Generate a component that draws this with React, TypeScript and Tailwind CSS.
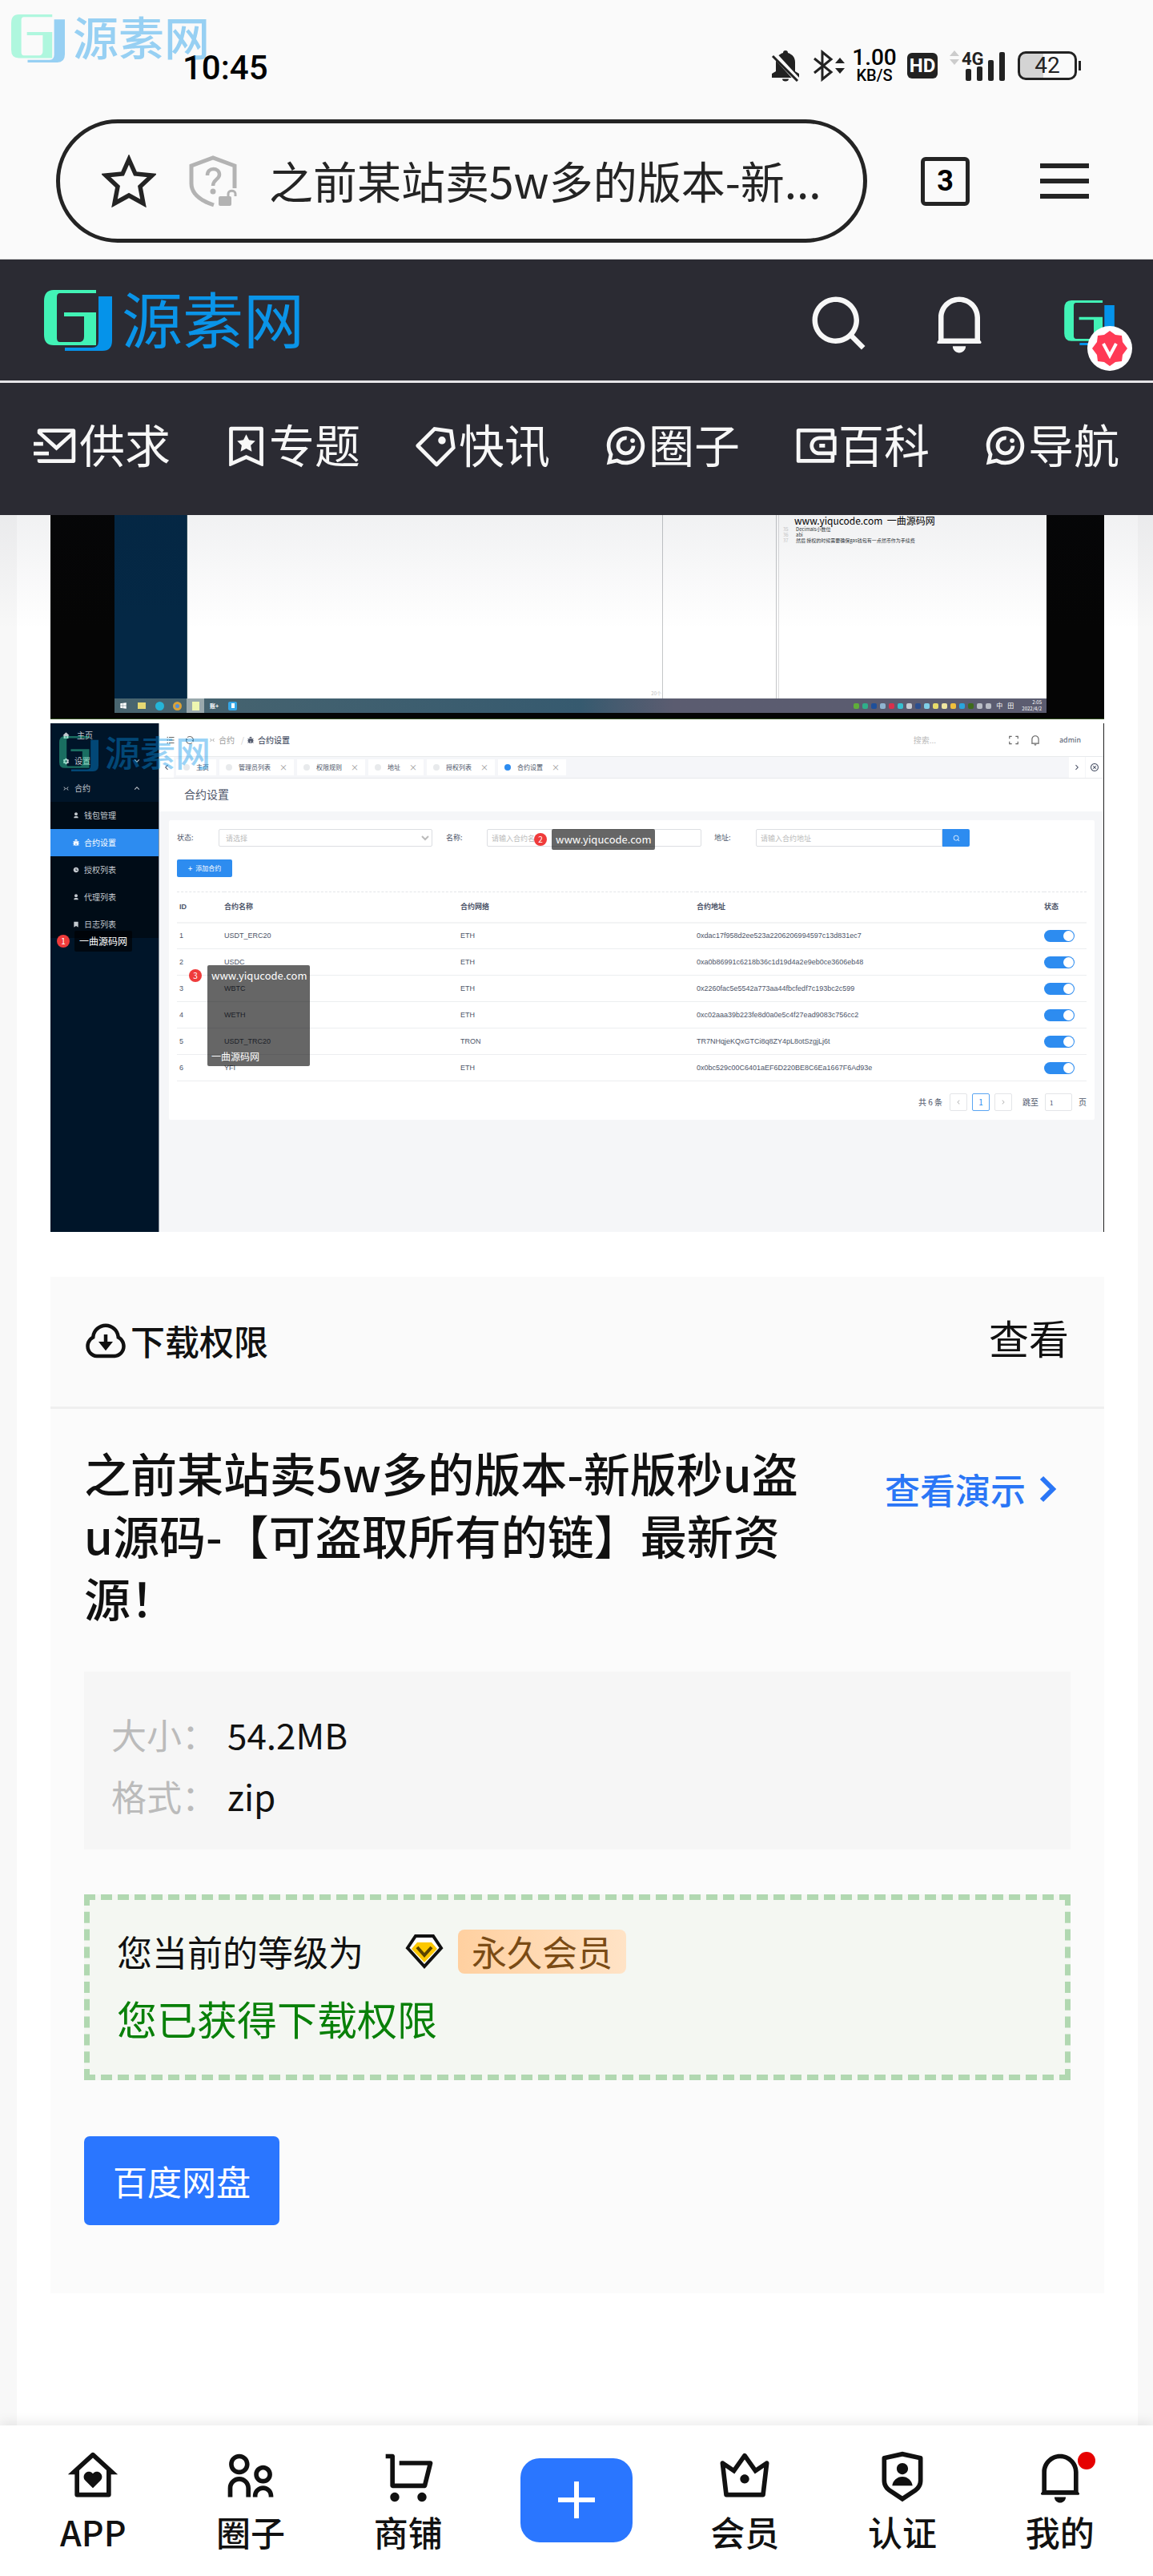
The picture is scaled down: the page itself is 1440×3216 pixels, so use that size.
import React from "react";
import {
  RiMailSendLine,
  RiBookmark3Line,
  RiPriceTag3Line,
  RiWallet3Line,
  RiSearchLine,
  RiNotification4Line,
  RiHomeHeartLine,
  RiParentLine,
  RiShoppingCartLine,
  RiVipCrown2Line,
  RiShieldUserLine,
  RiDownloadCloudLine,
  RiHome4Fill,
  RiSettings3Fill,
  RiUser3Fill,
  RiBookmarkFill,
  RiBugFill,
  RiTimeFill,
  RiFullscreenLine,
  RiListUnordered,
  RiRefreshLine,
  RiCloseCircleLine,
  RiArrowDownSLine,
  RiArrowUpSLine,
  RiArrowLeftSLine,
  RiArrowRightSLine,
  RiWindowsFill,
  RiContractLeftRightLine,
} from "react-icons/ri";

function LogoMark({ className }: { className: string }) {
  return (
    <svg viewBox="0 0 85 76" className={className} aria-hidden="true">
      <path
        fill="#42f3b6"
        d="M65 0H12Q0 0 0 14V56Q0 69 12 69H65V28H25V33H50V58Q50 64 45 65H20Q16 65 16 60V9Q16 4 20 4H65Z"
      />
      <path fill="#0593ea" d="M68 8H85V63Q85 76 73 76H26V72H60Q68 72 68 64Z" />
    </svg>
  );
}

function ChatRingIcon({ className }: { className?: string }) {
  return (
    <svg viewBox="0 0 24 24" className={className} fill="currentColor" aria-hidden="true">
      <path d="M7.291 20.824L2 22l1.176-5.291A9.956 9.956 0 0 1 2 12C2 6.477 6.477 2 12 2s10 4.477 10 10-4.477 10-10 10a9.956 9.956 0 0 1-4.709-1.176zm.29-2.113l.653.35A7.955 7.955 0 0 0 12 20a8 8 0 1 0-8-8c0 1.334.325 2.618.94 3.766l.349.653-.655 2.947 2.947-.655z" />
      <path d="M12.5 8A4 4 0 1 0 16 12" fill="none" stroke="currentColor" strokeWidth="2" />
      <circle cx="15.6" cy="9.3" r="1.2" />
    </svg>
  );
}

function StatusBar() {
  return (
    <div className="flex h-12 items-center justify-between pr-[90px] pl-[228px] text-[#222]">
      <time className="pt-[6px] font-['Roboto'] text-[42px] leading-12 font-medium text-black">10:45</time>
      <div className="flex items-center gap-[14px]">
        <svg viewBox="0 0 36 40" className="h-10 w-9" aria-label="静音">
          <path
            fill="#222"
            d="M18 1a3 3 0 0 1 3 3c6 2 9 6 9 12v11l5 3v5H1v-5l5-3V16C6 10 9 6 15 4a3 3 0 0 1 3-3ZM14 36.500h8a4 3 0 0 1-8 0Z"
          />
          <path d="M1 3 35 40" stroke="#fafafa" strokeWidth="7" />
          <path d="M2 8 33 39" stroke="#222" strokeWidth="3" />
        </svg>
        <svg viewBox="0 0 40 40" className="-mr-1 ml-[2px] size-10" aria-label="蓝牙">
          <path d="M2 11 23 28 12 37V3L23 12 2 29" fill="none" stroke="#222" strokeWidth="3" />
          <path d="M28 17h12l-6-7ZM28 23h12l-6 7Z" fill="#222" />
        </svg>
        <div className="flex w-[54px] flex-col items-center font-['Roboto'] font-medium text-black">
          <span className="text-[28px] leading-6">1.00</span>
          <span className="text-[20px] leading-5">KB/S</span>
        </div>
        <span className="flex h-8 w-[38px] items-center justify-center rounded-md bg-[#222] font-['Roboto'] text-[24px] font-bold text-white">
          HD
        </span>
        <svg viewBox="0 0 72 40" className="h-10 w-[72px]" aria-label="4G 信号">
          <path d="M1 8h12L7 1ZM1 12h12l-6 7Z" fill="#ccc" />
          <text x="16" y="19" fontFamily="Roboto" fontSize="22" fontWeight="700" fill="#222">
            4G
          </text>
          <rect x="21" y="24" width="7" height="15" rx="2" fill="#222" />
          <rect x="35" y="21" width="7" height="18" rx="2" fill="#222" />
          <rect x="49" y="13" width="7" height="26" rx="2" fill="#222" />
          <rect x="63" y="3" width="7" height="36" rx="2" fill="#222" />
        </svg>
        <div className="flex items-center gap-[2px]">
          <span className="flex h-9 w-[74px] items-center justify-center rounded-[10px] border-3 border-[#222] bg-linear-to-r from-[#d4d4d4] from-42% to-transparent to-42% font-['Roboto'] text-[28px] text-[#222]">
            42
          </span>
          <span className="h-3 w-[3px] bg-[#222]" />
        </div>
      </div>
    </div>
  );
}

function AddressBar() {
  return (
    <div className="mt-[43px] flex items-center pr-20 pl-[70px]">
      <label className="flex h-[154px] min-w-0 flex-1 items-center rounded-full border-5 border-[#242424] pl-[52px]">
        <svg viewBox="0 0 68 66" className="h-[66px] w-[68px] shrink-0" aria-hidden="true">
          <path
            d="M34 6 42 24 63 26 48 40 52 61 34 51 16 61 20 40 5 26 26 24Z"
            fill="none"
            stroke="#242424"
            strokeWidth="5.500"
          />
        </svg>
        <svg viewBox="0 0 62 66" className="ml-10 h-[66px] w-[62px] shrink-0" fill="none" aria-hidden="true">
          <path
            d="M58 42V14L31 4 4 14v22c0 12 10 21 28 27"
            stroke="#b3b3b3"
            strokeWidth="5"
          />
          <path d="M24 26c0-11 15-10 15-1 0 6-8 6-8 14" stroke="#b3b3b3" strokeWidth="4.500" />
          <circle cx="31" cy="46" r="3.500" fill="#b3b3b3" />
          <rect x="38" y="52" width="16" height="12" rx="2" fill="#b3b3b3" />
          <path d="M50 52v-3c0-5 9-5 9 0v3" stroke="#b3b3b3" strokeWidth="3" />
        </svg>
        <input
          type="text"
          aria-label="网址"
          defaultValue="之前某站卖5w多的版本-新..."
          className="ml-[39px] min-w-0 flex-1 bg-transparent pb-1 text-[55px] text-[#242424] outline-none"
        />
      </label>
      <button
        type="button"
        aria-label="标签页"
        className="ml-[67px] flex size-[61px] items-center justify-center rounded-md border-5 border-[#242424] font-['Roboto'] text-[36px] font-bold text-black"
      >
        3
      </button>
      <button type="button" aria-label="菜单" className="ml-[88px] flex w-[61px] flex-col gap-[13px]">
        <span className="h-[6px] bg-[#242424]" />
        <span className="h-[6px] bg-[#242424]" />
        <span className="h-[6px] bg-[#242424]" />
      </button>
    </div>
  );
}

function BrowserChrome() {
  return (
    <div className="relative border-b border-[#d8d8d8] bg-[#fafafa] pt-[58px] pb-5">
      <StatusBar />
      <AddressBar />
      <div className="absolute top-[14px] left-[14px] flex items-center gap-[10px] opacity-40">
        <LogoMark className="h-[60px] w-[67px]" />
        <span className="pb-2 text-[57px] leading-[60px] font-medium text-[#0593ea]">源素网</span>
      </div>
    </div>
  );
}

function SiteHeader() {
  const links = [
    { label: "供求", icon: <RiMailSendLine className="size-[57px]" /> },
    { label: "专题", icon: <RiBookmark3Line className="size-[57px]" /> },
    { label: "快讯", icon: <RiPriceTag3Line className="size-[57px]" /> },
    { label: "圈子", icon: <ChatRingIcon className="size-[57px]" /> },
    { label: "百科", icon: <RiWallet3Line className="size-[57px]" /> },
    { label: "导航", icon: <ChatRingIcon className="size-[57px]" /> },
  ];
  return (
    <header className="bg-[#2b2b33] text-[#f7f7f7]">
      <div className="flex h-[154px] items-center justify-between border-b-3 border-[#e6e5e8] pr-12 pl-[55px]">
        <a href="#home" className="flex items-center gap-3">
          <LogoMark className="h-[76px] w-[85px]" />
          <span className="pb-2 text-[76px] leading-[90px] text-[#0a94e8]">源素网</span>
        </a>
        <div className="flex items-center gap-[73px] pt-[6px]">
          <button type="button" aria-label="搜索">
            <RiSearchLine className="size-[78px]" />
          </button>
          <button type="button" aria-label="通知">
            <RiNotification4Line className="size-[78px]" />
          </button>
          <button type="button" aria-label="个人中心" className="relative flex h-[84px] w-[82px] items-center justify-end">
            <LogoMark className="h-14 w-[63px]" />
            <span className="absolute -right-[22px] -bottom-[18px] flex size-14 items-center justify-center rounded-full bg-white">
              <svg viewBox="0 0 44 44" className="size-11" aria-hidden="true">
                <path
                  fill="#ff3a55"
                  d="M22 0 29 5 37 6 38 14 44 22 38 30 37 38 29 39 22 44 15 39 7 38 6 30 0 22 6 14 7 6 15 5Z"
                />
                <path d="M14 16 22 31 30 16" fill="none" stroke="#fff" strokeWidth="4" />
              </svg>
            </span>
          </button>
        </div>
      </div>
      <nav className="flex h-[165px] items-center justify-between px-[42px] pb-[8px]">
        {links.map((l) => (
          <a key={l.label} href={"#" + l.label} className="flex items-center text-[57px] leading-[68px]">
            {l.icon}
            <span className="pb-2">{l.label}</span>
          </a>
        ))}
      </nav>
    </header>
  );
}

function DesktopPhoto() {
  const trayColors = [
    "bg-[#5fae3a]",
    "bg-[#2fae8a]",
    "bg-[#1e4f9a]",
    "bg-[#8fb4d0]",
    "bg-[#d9304c]",
    "bg-[#35c0d0]",
    "bg-[#c8ccd2]",
    "bg-[#2b4f8f]",
    "bg-[#7fd0e8]",
    "bg-[#e8dc6a]",
    "bg-[#efe6a0]",
    "bg-[#f0bf3c]",
    "bg-[#2aa5dc]",
    "bg-[#3e6b1c]",
    "bg-[#b9bdc6]",
    "bg-[#b9bdc6]",
  ];
  return (
    <figure className="border-b border-[#33511f] bg-[#050505] pr-[72px] pb-[7px] pl-20">
      <div className="flex h-[229px] bg-white">
        <div className="w-[91px] border-r border-[#2c4b58] bg-[#042845]" />
        <div className="flex min-w-0 flex-1 items-end justify-end pr-px text-[6px] leading-3 text-[#bbb]">20个</div>
        <div className="w-[143px] border-x border-[#c4c6c8]" />
        <div className="ml-[2px] w-[335px] border-l border-[#dcdcde] pl-[5px] text-[6px] leading-[7px] text-[#33383c]">
          <p className="pl-[14px] text-[12px] leading-[14px] whitespace-pre text-black">www.yiqucode.com  一曲源码网</p>
          <p>
            <span className="inline-block w-4 text-[#ccc]">35</span>Decimals小数位
          </p>
          <p>
            <span className="inline-block w-4 text-[#ccc]">36</span>abi
          </p>
          <p>
            <span className="inline-block w-4 text-[#ccc]">37</span>然后 授权的时候需要确保gas钱包有一点然币作为手续费
          </p>
        </div>
      </div>
      <div className="flex h-[18px] items-center bg-linear-to-r from-[#49656f] via-[#365a6f] via-50% to-[#5b5c70] to-60% pr-[6px] pl-[6px] text-white">
        <RiWindowsFill className="size-[10px]" />
        <span className="ml-[13px] h-2 w-[10px] bg-[#e5d873]" />
        <span className="ml-3 size-[11px] rounded-full bg-[#25b5d8]" />
        <span className="ml-[11px] size-[11px] rounded-full border-3 border-[#d8a23a] bg-[#5490d8]" />
        <span className="ml-[6px] flex h-[18px] w-[22px] items-center justify-center bg-[#9aa9ad]">
          <span className="h-[11px] w-[9px] bg-[#eef5b0]" />
        </span>
        <span className="ml-[7px] text-[7px] font-bold">账+</span>
        <span className="ml-3 flex size-[11px] items-center justify-center rounded-xs bg-[#34a6e6]">
          <span className="h-[6px] w-1 bg-white" />
        </span>
        <span className="flex-1" />
        <span className="flex items-center gap-1">
          {trayColors.map((c, i) => (
            <span key={i} className={"size-[7px] rounded-xs " + c} />
          ))}
        </span>
        <span className="ml-[6px] text-[8px]">中</span>
        <span className="ml-[6px] text-[8px]">田</span>
        <span className="ml-[10px] flex flex-col text-right text-[6px] leading-2">
          <span>2:05</span>
          <span>2022/4/2</span>
        </span>
      </div>
    </figure>
  );
}

const ROWS = [
  ["1", "USDT_ERC20", "ETH", "0xdac17f958d2ee523a2206206994597c13d831ec7"],
  ["2", "USDC", "ETH", "0xa0b86991c6218b36c1d19d4a2e9eb0ce3606eb48"],
  ["3", "WBTC", "ETH", "0x2260fac5e5542a773aa44fbcfedf7c193bc2c599"],
  ["4", "WETH", "ETH", "0xc02aaa39b223fe8d0a0e5c4f27ead9083c756cc2"],
  ["5", "USDT_TRC20", "TRON", "TR7NHqjeKQxGTCi8q8ZY4pL8otSzgjLj6t"],
  ["6", "YFI", "ETH", "0x0bc529c00C6401aEF6D220BE8C6Ea1667F6Ad93e"],
];

function Marker({ n }: { n: string }) {
  return (
    <span className="flex size-4 items-center justify-center rounded-full bg-[#ef3b3b] text-[10px] leading-4 text-white">{n}</span>
  );
}

function AdminSidebar() {
  const sub = [
    { label: "钱包管理", icon: <RiUser3Fill className="size-2" />, active: false },
    { label: "合约设置", icon: <RiBugFill className="size-[10px]" />, active: true },
    { label: "授权列表", icon: <RiTimeFill className="size-2" />, active: false },
    { label: "代理列表", icon: <RiUser3Fill className="size-2" />, active: false },
    { label: "日志列表", icon: <RiBookmarkFill className="size-2" />, active: false },
  ];
  return (
    <aside className="w-[136px] shrink-0 border-r border-[#8b96a0] bg-[#001529] text-[10px] leading-4 text-[#c3c9cf]">
      <div className="flex h-[30px] items-center gap-[9px] pl-[15px]">
        <RiHome4Fill className="size-[9px]" />
        主页
      </div>
      <div className="flex h-[34px] items-center gap-[6px] pr-[21px] pl-[15px]">
        <RiSettings3Fill className="size-[9px]" />
        <span className="flex-1">设置</span>
        <RiArrowDownSLine className="size-3" />
      </div>
      <div className="flex h-[34px] items-center gap-[6px] pr-[21px] pl-[15px]">
        <RiContractLeftRightLine className="size-[9px]" />
        <span className="flex-1">合约</span>
        <RiArrowUpSLine className="size-3" />
      </div>
      <div className="bg-[#000c17]">
        {sub.map((s) => (
          <div
            key={s.label}
            className={
              s.active
                ? "flex h-[34px] items-center gap-[5px] bg-[#2d8cf0] pl-[27px] text-white"
                : "flex h-[34px] items-center gap-[6px] pl-7"
            }
          >
            {s.icon}
            {s.label}
          </div>
        ))}
      </div>
    </aside>
  );
}

function AdminTabs() {
  const tabs = ["管理员列表", "权限规则", "地址", "授权列表", "合约设置"];
  return (
    <div className="flex h-7 items-center border-y border-[#e8eaec] bg-[#f5f6f9] text-[8px] leading-4 text-[#4c5468]">
      <span className="flex h-full w-[18px] items-center justify-center bg-white">
        <RiArrowLeftSLine className="size-3" />
      </span>
      <div className="ml-[3px] flex h-5 items-center gap-1">
        <span className="flex h-full items-center gap-2 bg-white px-[9px]">
          <span className="size-2 rounded-full bg-[#e8eaec]" />
          主页
        </span>
        {tabs.map((t) => (
          <span key={t} className="flex h-full items-center gap-2 bg-white px-2">
            <span
              className={
                t === "合约设置" ? "size-2 rounded-full bg-[#2d8cf0]" : "size-2 rounded-full bg-[#e8eaec]"
              }
            />
            {t}
            <span className="ml-[3px] text-[10px] text-[#999]">×</span>
          </span>
        ))}
      </div>
      <span className="ml-auto flex h-full w-5 items-center justify-center bg-white">
        <RiArrowRightSLine className="size-3" />
      </span>
      <span className="ml-px flex h-full w-[22px] items-center justify-center bg-white">
        <RiCloseCircleLine className="size-3" />
      </span>
    </div>
  );
}

function AdminScreenshot() {
  return (
    <figure className="relative mt-[5px] flex h-[635px] border-r border-[#222] bg-[#f5f6f8] text-[#4c5468]">
      <AdminSidebar />
      <div className="min-w-0 flex-1">
        <div className="flex h-[41px] items-center bg-white pr-[28px] pl-2 text-[10px]">
          <RiListUnordered className="size-3 text-[#666]" />
          <RiRefreshLine className="ml-3 size-3 text-[#777]" />
          <RiContractLeftRightLine className="ml-[18px] size-2 text-[#999]" />
          <span className="ml-[4px] text-[#999]">合约</span>
          <span className="ml-2 text-[#ccc]">/</span>
          <RiBugFill className="ml-[3px] size-[10px]" />
          <span className="ml-1 font-medium">合约设置</span>
          <span className="mr-[90px] ml-auto text-[#bbb]">搜索...</span>
          <RiFullscreenLine className="size-[14px] text-[#666]" />
          <RiNotification4Line className="mx-[13px] size-[14px] text-[#666]" />
          <span className="ml-[10px] text-[9px]">admin</span>
        </div>
        <AdminTabs />
        <h3 className="h-[41px] bg-white pl-[31px] text-[14px] leading-[38px]">合约设置</h3>
        <div className="mt-[11px] mr-[11px] ml-3 h-[374px] rounded-xs bg-white px-[10px] pt-[11px] text-[9px] leading-4">
          <form className="flex h-[22px] items-center" onSubmit={(e) => e.preventDefault()}>
            <label htmlFor="state" className="w-[52px]">
              状态:
            </label>
            <select
              id="state"
              className="h-[22px] w-[267px] rounded-xs border border-[#dcdee2] bg-white px-1 text-[9px] text-[#bbb]"
            >
              <option>请选择</option>
            </select>
            <label htmlFor="cname" className="ml-[17px] w-[51px]">
              名称:
            </label>
            <input
              id="cname"
              placeholder="请输入合约名称"
              className="h-[22px] w-[268px] rounded-xs border border-[#dcdee2] px-[5px] text-[9px] placeholder:text-[#bbb]"
            />
            <label htmlFor="caddr" className="ml-4 w-[52px]">
              地址:
            </label>
            <input
              id="caddr"
              placeholder="请输入合约地址"
              className="h-[22px] w-[233px] rounded-l-xs border border-[#dcdee2] px-[5px] text-[9px] placeholder:text-[#bbb]"
            />
            <button
              type="submit"
              aria-label="搜索合约"
              className="flex h-[22px] w-[34px] items-center justify-center rounded-r-xs bg-[#2d8cf0] text-white"
            >
              <RiSearchLine className="size-[9px]" />
            </button>
          </form>
          <button type="button" className="mt-4 flex h-[22px] w-[69px] items-center justify-center gap-1 rounded-xs bg-[#2d8cf0] text-[8px] text-white">
            <span className="text-[10px]">+</span>添加合约
          </button>
          <table className="mt-[18px] w-full table-fixed border-t border-dashed border-[#e3e5e8] text-left font-['Liberation_Sans','Noto_Sans_CJK_SC',sans-serif]">
            <thead>
              <tr className="h-[38px] border-b-2 border-[#f3f4f5]">
                <th className="w-[59px] pl-[3px]">ID</th>
                <th className="w-[295px]">合约名称</th>
                <th className="w-[295px]">合约网络</th>
                <th>合约地址</th>
                <th className="w-[53px]">状态</th>
              </tr>
            </thead>
            <tbody>
              {ROWS.map((r) => (
                <tr key={r[0]} className="h-[33px] border-b border-[#eceef0]">
                  <td className="pl-[3px]">{r[0]}</td>
                  <td>{r[1]}</td>
                  <td>{r[2]}</td>
                  <td>{r[3]}</td>
                  <td>
                    <input
                      type="checkbox"
                      defaultChecked
                      aria-label={r[1] + " 状态"}
                      className="flex h-[15px] w-[38px] appearance-none items-center justify-end rounded-full bg-[#2d8cf0] pr-px before:size-[13px] before:rounded-full before:bg-white"
                    />
                  </td>
                </tr>
              ))}
            </tbody>
          </table>
          <div className="mt-[15px] flex h-[22px] items-center justify-end text-[10px]">
            <span className="mr-[9px]">共 6 条</span>
            <button type="button" aria-label="上一页" className="flex h-[22px] w-[22px] items-center justify-center rounded-xs border border-[#e3e5e8] text-[#bbb]">
              <RiArrowLeftSLine />
            </button>
            <button type="button" className="mx-[6px] h-[22px] w-[22px] rounded-xs border border-[#5aa5f2] text-[#2d8cf0]">
              1
            </button>
            <button type="button" aria-label="下一页" className="flex h-[22px] w-[22px] items-center justify-center rounded-xs border border-[#e3e5e8] text-[#bbb]">
              <RiArrowRightSLine />
            </button>
            <label className="ml-[13px] flex items-center gap-2">
              跳至
              <input defaultValue="1" className="h-[22px] w-[34px] rounded-xs border border-[#e3e5e8] px-[5px] text-[8px]" />
            </label>
            <span className="ml-2">页</span>
          </div>
        </div>
      </div>

      <div className="absolute top-[259px] left-2 flex items-center gap-[6px]">
        <Marker n="1" />
        <span className="rounded-xs bg-black/60 px-[6px] text-[12px] leading-[26px] text-white">一曲源码网</span>
      </div>
      <div className="absolute top-[132px] left-[604px] flex items-center gap-[6px]">
        <Marker n="2" />
        <span className="rounded-xs bg-black/60 px-[5px] text-[13px] leading-[26px] text-white">www.yiqucode.com</span>
      </div>
      <div className="absolute top-[302px] left-[173px] flex items-start gap-[7px]">
        <span className="pt-[5px]">
          <Marker n="3" />
        </span>
        <span className="flex h-[126px] w-32 flex-col justify-between rounded-xs bg-black/60 px-[5px] text-white">
          <span className="text-[13px] leading-[26px]">www.yiqucode.com</span>
          <span className="text-[12px] leading-6">一曲源码网</span>
        </span>
      </div>
      <div className="absolute top-[13px] left-[11px] flex items-center gap-2 opacity-40">
        <LogoMark className="h-11 w-[49px]" />
        <span className="pb-[6px] text-[44px] leading-[44px] font-medium text-[#0593ea]">源素网</span>
      </div>
    </figure>
  );
}

function DownloadPanel() {
  return (
    <section className="mt-14 bg-[#fbfbfb] text-[#111]">
      <div className="flex h-[165px] items-center justify-between border-b-3 border-[#efefef] bg-[#fafafa] px-[42px]">
        <h2 className="flex items-center gap-1 text-[43px] leading-[60px] font-medium">
          <RiDownloadCloudLine className="size-[54px]" />
          <span className="pb-1">下载权限</span>
        </h2>
        <a href="#detail" className="mr-[2px] mb-3 text-[50px] leading-[60px]">
          查看
        </a>
      </div>
      <div className="px-[42px] pt-10 pb-[85px]">
        <div className="flex items-start justify-between">
          <h1 className="w-[912px] text-[58px] leading-[78px] font-medium">
            之前某站卖5w多的版本-新版秒u盗u源码-【可盗取所有的链】最新资源！
          </h1>
          <a href="#demo" className="mt-[30px] mr-4 flex items-center gap-4 text-[44px] leading-[60px] font-medium text-[#2a76f6]">
            查看演示
            <svg viewBox="0 0 24 34" className="h-[34px] w-6" fill="none" aria-hidden="true">
              <path d="M4 3 18 17 4 31" stroke="currentColor" strokeWidth="6" />
            </svg>
          </a>
        </div>
        <dl className="mt-[54px] grid grid-cols-[145px_1fr] bg-[#f6f6f6] px-[34px] pt-10 pb-7 text-[44px] leading-[77px]">
          <dt className="text-[#bbb]">大小：</dt>
          <dd>54.2MB</dd>
          <dt className="text-[#bbb]">格式：</dt>
          <dd>zip</dd>
        </dl>
        <div className="mt-[56px] border-7 border-dashed border-[#b1d8b1] bg-[#f4f7f2] px-[34px] pt-[25px] pb-[26px]">
          <div className="flex h-[78px] items-center text-[44px]">
            您当前的等级为
            <svg viewBox="0 0 48 44" className="ml-[52px] h-11 w-12" aria-hidden="true">
              <path d="M13 3H35L45 18 24 41 3 18Z" fill="#fff" stroke="#111" strokeWidth="4" />
              <path d="M15 11H33L40 19 24 36 8 19Z" fill="#fdc800" />
              <path d="M15 17 24 27 33 17" fill="none" stroke="#5a4300" strokeWidth="4" />
            </svg>
            <span className="ml-[18px] rounded-lg bg-linear-to-r from-[#ffd0a0] to-[#ffe3c6] px-[17px] leading-[55px] text-[#7a4b15]">
              永久会员
            </span>
          </div>
          <p className="text-[50px] leading-[89px] text-[#098009]">您已获得下载权限</p>
        </div>
        <button
          type="button"
          className="mt-[70px] rounded-[7px] bg-[#2a76ff] px-9 text-[43px] leading-[111px] text-white"
        >
          百度网盘
        </button>
      </div>
    </section>
  );
}

function TabBar() {
  const left = [
    { label: "APP", icon: <RiHomeHeartLine className="size-[68px]" /> },
    { label: "圈子", icon: <RiParentLine className="size-[68px]" /> },
    { label: "商铺", icon: <RiShoppingCartLine className="size-[68px]" /> },
  ];
  const right = [
    { label: "会员", icon: <RiVipCrown2Line className="size-[68px]" /> },
    { label: "认证", icon: <RiShieldUserLine className="size-[68px]" /> },
    { label: "我的", icon: <RiNotification4Line className="size-[68px]" />, dot: true },
  ];
  const item = (t: { label: string; icon: React.ReactNode; dot?: boolean }) => (
    <a
      key={t.label}
      href={"#" + t.label}
      className="flex flex-1 flex-col items-center text-[43px] leading-[60px] font-medium"
    >
      <span className="relative">
        {t.icon}
        {t.dot && <span className="absolute top-[3px] -right-[10px] size-[22px] rounded-full bg-[#e60000]" />}
      </span>
      <span className="mt-1">{t.label}</span>
    </a>
  );
  return (
    <nav className="relative flex items-center bg-white px-[18px] pt-[30px] pb-[26px] text-[#111] shadow-[0_-4px_14px_rgba(0,0,0,0.08)]">
      {left.map(item)}
      <div className="flex w-[224px] justify-center pb-[6px]">
        <button
          type="button"
          aria-label="发布"
          className="flex h-[105px] w-[140px] items-center justify-center rounded-3xl bg-[#2a76ff]"
        >
          <svg viewBox="0 0 48 48" className="size-12" aria-hidden="true">
            <path d="M24 1V47M1 24H47" stroke="#fff" strokeWidth="6" />
          </svg>
        </button>
      </div>
      {right.map(item)}
    </nav>
  );
}

export default function App() {
  return (
    <div className="flex min-h-screen flex-col bg-[#f8f8f8] font-['Noto_Sans_CJK_SC','Noto_Sans',sans-serif]">
      <BrowserChrome />
      <SiteHeader />
      <main className="relative mr-[19px] ml-[21px] flex-1 bg-white pr-[42px] pl-[42px]">
        <DesktopPhoto />
        <AdminScreenshot />
        <DownloadPanel />
        <div className="pointer-events-none absolute top-0 -right-[19px] -left-[21px] h-36 bg-linear-to-b from-[#101830]/6 to-transparent" />
      </main>
      <TabBar />
    </div>
  );
}
